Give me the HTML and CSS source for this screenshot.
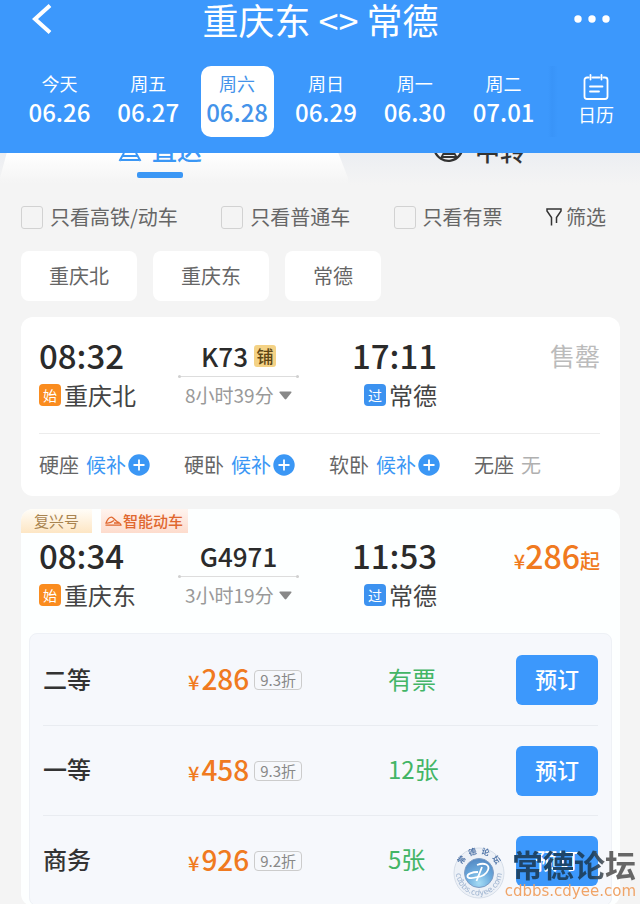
FILE: index.html
```
<!DOCTYPE html>
<html lang="zh-CN">
<head>
  <meta charset="UTF-8" />
  <meta name="viewport" content="width=device-width, initial-scale=1.0"/>
  <title>重庆东 - 常德</title>
  <link rel="stylesheet" href="styles.css">
</head>
<body>
  <header class="header">
    <div class="title-bar">
      <button type="button" class="icon-btn" aria-label="返回">
        <svg width="22" height="30" viewBox="0 0 22 30"><path d="M19 1.500 4 15l15 13.500" fill="none" stroke="#fff" stroke-width="4"/></svg>
      </button>
      <h1>重庆东 &lt;&gt; 常德</h1>
      <button type="button" class="icon-btn" aria-label="更多">
        <svg width="36" height="8" viewBox="0 0 36 8" fill="#fff"><circle cx="4" cy="4" r="3.7"/><circle cx="18" cy="4" r="3.7"/><circle cx="32" cy="4" r="3.7"/></svg>
      </button>
    </div>
    <nav class="date-bar">
      <div class="dates">
        <button type="button" class="date"><span>今天</span><b>06.26</b></button>
        <button type="button" class="date"><span>周五</span><b>06.27</b></button>
        <button type="button" class="date active"><span>周六</span><b>06.28</b></button>
        <button type="button" class="date"><span>周日</span><b>06.29</b></button>
        <button type="button" class="date"><span>周一</span><b>06.30</b></button>
        <button type="button" class="date"><span>周二</span><b>07.01</b></button>
      </div>
      <button type="button" class="calendar">
        <svg width="26" height="26" viewBox="0 0 26 26" fill="none" stroke="#fff" stroke-width="1.8" stroke-linecap="round"><path d="M9.5 3.5h7M5.5 3.5H4A2.5 2.5 0 0 0 1.500 6v16.500A2.500 2.500 0 0 0 4 25h18a2.500 2.500 0 0 0 2.500-2.500V6A2.500 2.500 0 0 0 22 3.500h-1.500M7.500 1v4.500M18.500 1v4.500M7 12.500h12.500M7 17.500h9"/></svg>
        <span>日历</span>
      </button>
    </nav>
  </header>

  <main>
    <div class="tabs">
      <button type="button" class="tab active">
        <svg width="24" height="26" viewBox="0 0 24 26" fill="none" stroke="#3b97f5" stroke-width="2"><rect x="5" y="2" width="14" height="14" rx="4"/><path d="M5 9h14M6 17 1.500 25M18 17l4.500 8M5 20h14M3 24h18"/></svg>
        <span>直达</span>
      </button>
      <button type="button" class="tab">
        <svg width="32" height="32" viewBox="0 0 32 32" fill="none" stroke="#333" stroke-width="2.400"><path d="M3 10a14.200 14.200 0 0 1 25-1.500M29.500 12A14.200 14.200 0 0 1 1.800 17"/><path d="M11 8h10v9H11zM12 17l-4 7M20 17l4 7M10 20h12M9 23h14" stroke-width="1.800"/></svg>
        <span>中转</span>
      </button>
    </div>

    <div class="filters">
      <label class="check"><input type="checkbox" name="fast" />只看高铁/动车</label>
      <label class="check"><input type="checkbox" name="normal" />只看普通车</label>
      <label class="check"><input type="checkbox" name="available" />只看有票</label>
      <button type="button" class="filter-btn">
        <svg width="16" height="18" viewBox="0 0 16 18" fill="none" stroke="#333" stroke-width="1.500"><path d="M5.500 17.500v-8L1 3V1h14v2l-4.500 6.500V15"/></svg>筛选
      </button>
    </div>

    <div class="stations">
      <button type="button">重庆北</button>
      <button type="button">重庆东</button>
      <button type="button">常德</button>
    </div>

    <section class="card">
      <div class="trip">
        <div class="from">
          <div class="time">08:32</div>
          <div class="place"><i class="mark start">始</i>重庆北</div>
        </div>
        <div class="train">
          <div class="number">K73<i class="sleeper">铺</i></div>
          <button type="button" class="duration">8小时39分<svg width="13" height="9" viewBox="0 0 13 9"><path d="M1 .5h11q1 .3.300 1.300L7.300 8q-.8.900-1.600 0L.600 1.800Q0 .8 1 .5z" fill="#888"/></svg></button>
        </div>
        <div class="to">
          <div class="time">17:11</div>
          <div class="place"><i class="mark pass">过</i>常德</div>
        </div>
        <div class="status sold-out">售罄</div>
      </div>
      <div class="seats">
        <div class="seat">硬座 <a href="#">候补<svg width="22" height="22" viewBox="0 0 22 22"><circle cx="11" cy="11" r="10.700" fill="#3b97f5"/><path d="M11 5.500v11M5.500 11h11" stroke="#fff" stroke-width="1.800"/></svg></a></div>
        <div class="seat">硬卧 <a href="#">候补<svg width="22" height="22" viewBox="0 0 22 22"><circle cx="11" cy="11" r="10.700" fill="#3b97f5"/><path d="M11 5.500v11M5.500 11h11" stroke="#fff" stroke-width="1.800"/></svg></a></div>
        <div class="seat">软卧 <a href="#">候补<svg width="22" height="22" viewBox="0 0 22 22"><circle cx="11" cy="11" r="10.700" fill="#3b97f5"/><path d="M11 5.500v11M5.500 11h11" stroke="#fff" stroke-width="1.800"/></svg></a></div>
        <div class="seat">无座 <span class="none">无</span></div>
      </div>
    </section>

    <section class="card open">
      <div class="tags">
        <span class="tag gold">复兴号</span>
        <span class="tag orange"><svg width="17" height="10" viewBox="0 0 17 10" fill="none" stroke="#e0672f" stroke-width="1.300"><path d="M.5 9.200h15.500c0-1.700-2-2.700-4-3.700C9.500 4 8 1.200 6.500 1.200 4 1.200 2 4.500 1 7c3 .5 5.500-.5 8-2.500M9 7h5"/></svg>智能动车</span>
      </div>
      <div class="trip">
        <div class="from">
          <div class="time">08:34</div>
          <div class="place"><i class="mark start">始</i>重庆东</div>
        </div>
        <div class="train">
          <div class="number">G4971</div>
          <button type="button" class="duration">3小时19分<svg width="13" height="9" viewBox="0 0 13 9"><path d="M1 .5h11q1 .3.300 1.300L7.300 8q-.8.900-1.600 0L.600 1.800Q0 .8 1 .5z" fill="#888"/></svg></button>
        </div>
        <div class="to">
          <div class="time">11:53</div>
          <div class="place"><i class="mark pass">过</i>常德</div>
        </div>
        <div class="status lowest"><small>¥</small>286<small>起</small></div>
      </div>
      <div class="tickets">
        <div class="ticket">
          <span class="class-name">二等</span>
          <span class="price"><small>¥</small><b>286</b><em>9.3折</em></span>
          <span class="left">有票</span>
          <button type="button" class="book-btn">预订</button>
        </div>
        <div class="ticket">
          <span class="class-name">一等</span>
          <span class="price"><small>¥</small><b>458</b><em>9.3折</em></span>
          <span class="left">12张</span>
          <button type="button" class="book-btn">预订</button>
        </div>
        <div class="ticket">
          <span class="class-name">商务</span>
          <span class="price"><small>¥</small><b>926</b><em>9.2折</em></span>
          <span class="left">5张</span>
          <button type="button" class="book-btn">预订</button>
        </div>
      </div>
    </section>
  </main>

  <div class="watermark">
    <svg width="52" height="52" viewBox="0 0 52 52">
      <defs>
        <radialGradient id="ball" cx="0.5" cy="0.85" r="0.9">
          <stop offset="0" stop-color="#a5dcf5"/>
          <stop offset="0.5" stop-color="#6aa9dc"/>
          <stop offset="1" stop-color="#4f83bf"/>
        </radialGradient>
        <path id="arcTop" d="M7.500 29A18.800 18.800 0 1 1 44.500 29"/>
        <path id="arcBottom" d="M3.500 22A22.800 22.800 0 1 0 48.500 22"/>
      </defs>
      <circle cx="26" cy="26" r="25" fill="#edf1f7" stroke="#d5dde8"/>
      <circle cx="26" cy="26" r="14.500" fill="url(#ball)" stroke="#7d9cc4"/>
      <path d="M24 18c8-3 13 0 11 5-1.500 4-6 7-11 7M29 20l-5.500 14M25 25c-6 0-11 2-10.500 4.500S21 31 24 30" fill="none" stroke="#fff" stroke-width="1.800"/>
      <text class="seal-name"><textPath href="#arcTop" startOffset="50%" text-anchor="middle">常  德  论  坛</textPath></text>
      <text class="seal-url"><textPath href="#arcBottom" startOffset="50%" text-anchor="middle">cdbbs.cdyee.com</textPath></text>
    </svg>
    <div class="watermark-text">
      <strong>常德论坛</strong>
      <span>cdbbs.cdyee.com</span>
    </div>
  </div>
</body>
</html>
```

FILE: styles.css
```
* {
  box-sizing: border-box;
}

body {
  margin: 0;
  font-family: "Noto Sans CJK SC", sans-serif;
  font-size: 20px;
  line-height: 24px;
  color: #666;
  background: #f4f4f4;
}

button {
  padding: 0;
  border: none;
  background: none;
  font: inherit;
  color: inherit;
  cursor: pointer;
}

svg {
  flex: none;
  display: block;
}

i, em {
  font-style: normal;
}

/* header */
.header {
  position: sticky;
  top: 0;
  z-index: 2;
  padding-bottom: 16px;
  background: #3c98fc;
  color: #fff;
}

.title-bar {
  display: flex;
  justify-content: space-between;
  align-items: center;
  height: 38px;
  padding: 0 30px 0 31px;
}

.title-bar h1 {
  margin: 0;
  font-size: 36px;
  line-height: 36px;
  font-weight: 400;
}

.icon-btn {
  display: flex;
  align-items: center;
  width: 36px;
  height: 38px;
}

.date-bar {
  display: flex;
  margin-top: 28px;
  padding-left: 15px;
}

.dates {
  flex: 1;
  display: grid;
  grid-template-columns: repeat(6, 1fr);
}

.date {
  justify-self: center;
  width: 73px;
  height: 71px;
  padding-bottom: 8px;
  border-radius: 10px;
}

.date span,
.date b {
  display: block;
}

.date span {
  font-size: 18px;
  line-height: 28px;
}

.date b {
  font-size: 24px;
  line-height: 30px;
  font-weight: 500;
}

.date.active {
  background: #fff;
  color: #4493ea;
}

.calendar {
  display: flex;
  flex-direction: column;
  align-items: center;
  width: 92px;
  padding: 8px 0 0 4px;
  background: linear-gradient(to right, #3c98fc, #3994f8 4px, #3c98fc 10px);
  font-size: 18px;
}

.calendar span {
  margin-top: 2px;
}

/* tabs slide under the header when the list scrolls */
.tabs {
  display: grid;
  grid-template-columns: 348fr 292fr;
  height: 60px;
  margin-top: -20px;
  background: linear-gradient(#e8ebf3, #eceef2 20px, #f4f4f4 52px);
}

.tab {
  display: flex;
  align-items: center;
  gap: 10px;
  height: 34px;
  padding-left: 85px;
  font-size: 25px;
  line-height: 32px;
  font-weight: 500;
  color: #333;
}

.tab.active {
  position: relative;
  height: 60px;
  padding: 0 26px 28px 118px;
  background: linear-gradient(#fff, #fff 20px, #f4f4f4 50px);
  clip-path: polygon(12px 0, 95% 0, 100% 45px, 100% 100%, 0 100%, 0 45px);
  color: #3b97f5;
}

.tab.active::after {
  content: "";
  position: absolute;
  left: 137px;
  bottom: 15px;
  width: 46px;
  height: 6px;
  border-radius: 2px;
  background: #3b97f5;
}

/* filters */
.filters {
  display: flex;
  justify-content: space-between;
  align-items: center;
  padding: 12px 34px 0 21px;
}

.check,
.filter-btn {
  display: flex;
  align-items: center;
}

.check input {
  appearance: none;
  width: 22px;
  height: 23px;
  margin: 0 7px 0 0;
  border: 1px solid #d2d2d2;
  border-radius: 3px;
}

.check input:checked {
  background: #3c98fc;
  border-color: #3c98fc;
}

.filter-btn {
  gap: 4px;
}

.stations {
  display: flex;
  gap: 16px;
  padding: 22px 21px 0;
}

.stations button {
  height: 50px;
  padding: 0 28px;
  border-radius: 8px;
  background: #fff;
}

/* train cards */
.card {
  margin: 16px 20px 0 21px;
  padding-top: 18px;
  border-radius: 12px;
  background: #fff;
}

.trip {
  display: grid;
  grid-template-columns: 139fr 121fr 138fr 163fr;
  margin: 0 20px 0 18px;
}

.time {
  font-size: 33px;
  line-height: 40px;
  font-weight: 500;
  color: #2b2b2b;
}

.place {
  display: flex;
  align-items: center;
  gap: 3px;
  height: 40px;
  font-size: 24px;
  color: #444;
}

.mark {
  width: 22px;
  height: 22px;
  border-radius: 4px;
  font-size: 14px;
  line-height: 22px;
  text-align: center;
  color: #fff;
}

.start {
  background: #fa8c1f;
}

.pass {
  background: #3c92f0;
}

.to {
  text-align: right;
}

.to .place {
  justify-content: flex-end;
}

.number {
  position: relative;
  display: flex;
  justify-content: center;
  align-items: center;
  gap: 6px;
  height: 42px;
  border-bottom: 1px solid #ddd;
  font-size: 26px;
  font-weight: 500;
  color: #2b2b2b;
}

.number::before,
.number::after {
  content: "";
  position: absolute;
  bottom: -2px;
  width: 3px;
  height: 3px;
  border-radius: 2px;
  background: #d0d0d0;
}

.number::before {
  left: 0;
}

.number::after {
  right: 0;
}

.sleeper {
  width: 22px;
  height: 22px;
  border-radius: 3px;
  background: #f4d285;
  font-size: 17px;
  line-height: 22px;
  text-align: center;
  color: #5e4614;
}

.duration {
  display: flex;
  align-items: center;
  gap: 5px;
  height: 36px;
  padding-left: 7px;
  font-size: 19px;
  color: #999;
}

.status {
  text-align: right;
  line-height: 40px;
}

.sold-out {
  font-size: 25px;
  color: #bbb;
}

.lowest {
  font-size: 32px;
  font-weight: 500;
  color: #f07a20;
}

.lowest small {
  font-size: 20px;
}

.seats {
  display: grid;
  grid-template-columns: repeat(3, 145fr) 126fr;
  height: 63px;
  margin: 18px 20px 0 18px;
  border-top: 1px solid #ececec;
}

.seat {
  display: flex;
  align-items: center;
  gap: 7px;
}

.seat a {
  display: flex;
  align-items: center;
  gap: 2px;
  color: #3b97f5;
  text-decoration: none;
}

.none {
  color: #b0b0b0;
}

/* expanded card */
.card.open {
  margin-top: 13px;
  padding-top: 0;
  background: #fdffff;
}

.tags {
  display: flex;
  gap: 9px;
  height: 26px;
}

.tag {
  display: flex;
  align-items: center;
  height: 24px;
  font-size: 15px;
}

.tag.gold {
  padding: 0 13px;
  border-radius: 12px 0 0 0;
  background: linear-gradient(#fffdf8, #fde6c4);
  color: #a98450;
}

.tag.orange {
  gap: 1px;
  padding: 0 5px 0 4px;
  background: linear-gradient(#fff4ef, #fddccd);
  font-weight: 500;
  color: #e0672f;
}

.tickets {
  margin: 18px 8px 0;
  padding: 1px 13px 0;
  border: 1px solid #eef1f6;
  border-radius: 8px;
  background: #f6f8fc;
}

.ticket {
  display: grid;
  grid-template-columns: 145fr 200fr 128fr 82px;
  align-items: center;
  height: 90px;
  font-size: 24px;
}

.ticket + .ticket {
  border-top: 1px solid #e9ecf1;
}

.class-name,
.left {
  padding-bottom: 3px;
}

.class-name {
  font-weight: 500;
  color: #333;
}

.price {
  display: flex;
  align-items: baseline;
  line-height: 32px;
  color: #f07a20;
}

.price small {
  font-size: 20px;
  font-weight: 500;
}

.price b {
  margin-left: 2px;
  font-size: 28px;
  font-weight: 500;
}

.price em {
  align-self: center;
  margin-left: 5px;
  padding: 0 5px;
  border: 1px solid #ccc;
  border-radius: 4px;
  font-size: 15px;
  line-height: 18px;
  color: #888;
}

.left {
  color: #43b566;
}

.book-btn {
  height: 50px;
  padding-bottom: 4px;
  border-radius: 6px;
  background: #3c98fc;
  font-size: 22px;
  font-weight: 500;
  color: #fff;
}

/* forum stamp */
.watermark {
  position: fixed;
  right: 4px;
  bottom: 4px;
  z-index: 3;
  display: flex;
  align-items: center;
  pointer-events: none;
}

.watermark-text {
  display: flex;
  flex-direction: column;
  align-items: flex-end;
}

.watermark strong {
  font-size: 31px;
  line-height: 36px;
  font-weight: 700;
  background: linear-gradient(to right, #1f4568, #1f4568 65%, #666 75%);
  background-clip: text;
  color: transparent;
}

.watermark span {
  font-family: "DejaVu Sans", sans-serif;
  font-size: 15px;
  line-height: 18px;
  color: #f0a468;
}

.seal-name {
  font-size: 8px;
  font-weight: 700;
  white-space: pre;
  fill: #5276a8;
}

.seal-url {
  font-family: "DejaVu Sans", sans-serif;
  font-size: 8px;
  fill: #9fb4d0;
}
```
